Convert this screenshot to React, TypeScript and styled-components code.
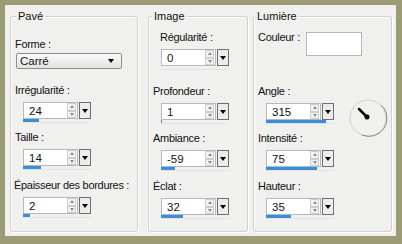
import React from "react";
import styled, { createGlobalStyle } from "styled-components";

const Global = createGlobalStyle`
  html, body { margin: 0; padding: 0; background: #9b9c76; }
  * { box-sizing: border-box; }
`;

const Frame = styled.div`
  width: 402px;
  height: 244px;
  background: #f0f0ee;
  border-style: solid;
  border-color: #9b9c76;
  border-width: 5px 6px 8px 5px;
  padding: 11px 0 4px 5px;
  display: flex;
  font-family: "Liberation Sans", Arial, sans-serif;
  font-size: 11px;
  color: #111;
`;

const Group = styled.div<{ $width: number; $gap: number; $pt: number }>`
  position: relative;
  width: ${(p) => p.$width}px;
  margin-left: ${(p) => p.$gap}px;
  height: 100%;
  border: 1px solid #d2d2cc;
  border-radius: 3px;
  box-shadow: inset 1px 1px 0 #fff, 1px 1px 0 #fff;
  padding-top: ${(p) => p.$pt}px;
  display: flex;
  flex-direction: column;
`;

const Legend = styled.span<{ $left: number }>`
  position: absolute;
  top: -7px;
  left: ${(p) => p.$left}px;
  padding: 0 2px;
  line-height: 13px;
  background: #f0f0ee;
`;

const Label = styled.div<{ $indent: number }>`
  line-height: 14px;
  height: 14px;
  white-space: nowrap;
  letter-spacing: -0.3px;
  padding-left: ${(p) => p.$indent}px;
`;

const FieldBox = styled.div<{ $mt: number }>`
  margin-top: ${(p) => p.$mt}px;
  display: flex;
  flex-direction: column;
`;

const SpinWrap = styled.div`
  margin-left: 12px;
  margin-top: 5px;
  width: 68px;
  display: flex;
  flex-direction: column;
`;

const SpinRow = styled.div`
  display: flex;
  height: 17px;
`;

const Edit = styled.div`
  flex: 1;
  display: flex;
  align-items: center;
  background: #fff;
  border: 1px solid #b4b9c0;
  padding-left: 5px;
  font-size: 11.5px;
`;

const Value = styled.span`
  flex: 1;
`;

const Arrows = styled.div`
  width: 9px;
  height: 15px;
  display: flex;
  flex-direction: column;
  margin-right: 1px;
`;

const ArrowBtn = styled.div<{ $up?: boolean }>`
  flex: 1;
  background: #f2f2f2;
  border: 1px solid #cdcdcd;
  display: flex;
  align-items: center;
  justify-content: center;
  &::after {
    content: "";
    border-left: 2.5px solid transparent;
    border-right: 2.5px solid transparent;
    ${(p) =>
      p.$up
        ? "border-bottom: 3px solid #8c8c8c;"
        : "border-top: 3px solid #8c8c8c;"}
  }
`;

const DropBtn = styled.div`
  width: 12px;
  margin-left: 1px;
  background: #ececec;
  border: 1px solid #6e6e6e;
  display: flex;
  align-items: center;
  justify-content: center;
  &::after {
    content: "";
    border-left: 3.5px solid transparent;
    border-right: 3.5px solid transparent;
    border-top: 4px solid #000;
  }
`;

const Track = styled.div`
  height: 4px;
  border-bottom: 1px solid #e2e2e2;
`;

const Fill = styled.div`
  height: 3px;
  background: #3a8ddc;
`;

const Combo = styled.div`
  margin: 2px 0 0 5px;
  width: 106px;
  height: 16px;
  border: 1px solid #8e8e8e;
  border-radius: 2px;
  background: linear-gradient(#fafafa, #e2e2e2);
  display: flex;
  align-items: center;
  justify-content: space-between;
  padding: 0 7px 0 3px;
  font-size: 11.5px;
  &::after {
    content: "";
    border-left: 3.5px solid transparent;
    border-right: 3.5px solid transparent;
    border-top: 4px solid #000;
  }
`;

const ColorRow = styled.div`
  display: flex;
  align-items: flex-start;
  gap: 6px;
`;

const Swatch = styled.div`
  margin-top: 2px;
  width: 56px;
  height: 24px;
  background: #fff;
  border: 1px solid #b8b8b8;
`;

const AngleRow = styled.div`
  display: flex;
  align-items: flex-start;
`;

const Dial = styled.svg`
  margin: 42px 0 -14px 14px;
`;

type FieldProps = { label: string; value: string; frac: number; mt: number; indent?: number };

const Field = ({ label, value, frac, mt, indent = 4 }: FieldProps) => (
  <FieldBox $mt={mt}>
    <Label $indent={indent}>{label}</Label>
    <SpinWrap>
      <SpinRow>
        <Edit>
          <Value>{value}</Value>
          <Arrows>
            <ArrowBtn $up />
            <ArrowBtn />
          </Arrows>
        </Edit>
        <DropBtn />
      </SpinRow>
      <Track>
        <Fill style={{ width: `${frac * 100}%` }} />
      </Track>
    </SpinWrap>
  </FieldBox>
);

export default function App() {
  return (
    <>
      <Global />
      <Frame>
        <Group $width={128} $gap={0} $pt={20}>
          <Legend $left={5}>Pavé</Legend>
          <Label $indent={4}>Forme :</Label>
          <Combo>Carré</Combo>
          <Field label="Irrégularité :" value="24" frac={0.24} mt={14} />
          <Field label="Taille :" value="14" frac={0.27} mt={7} />
          <Field label="Épaisseur des bordures :" value="2" frac={0.1} mt={8} indent={3} />
        </Group>
        <Group $width={100} $gap={10} $pt={13}>
          <Legend $left={3}>Image</Legend>
          <Field label="Régularité :" value="0" frac={0} mt={0} indent={11} />
          <Field label="Profondeur :" value="1" frac={0.01} mt={14} />
          <Field label="Ambiance :" value="-59" frac={0.205} mt={7} />
          <Field label="Éclat :" value="32" frac={0.32} mt={8} />
        </Group>
        <Group $width={139} $gap={5} $pt={13}>
          <Legend $left={1}>Lumière</Legend>
          <ColorRow>
            <Label $indent={4}>Couleur :</Label>
            <Swatch />
          </ColorRow>
          <AngleRow>
            <Field label="Angle :" value="315" frac={0.875} mt={28} />
            <Dial width="40" height="40" viewBox="0 0 40 40">
              <circle cx="20" cy="20" r="18" fill="none" stroke="#d0d0d0" strokeWidth="1" />
              <path d="M 33 7 A 18 18 0 0 1 14 37" fill="none" stroke="#8a8a8a" strokeWidth="1" />
              <line x1="11" y1="11" x2="19" y2="19" stroke="#000" strokeWidth="2.5" strokeLinecap="round" />
              <circle cx="19" cy="19" r="2.5" fill="#000" />
            </Dial>
          </AngleRow>
          <Field label="Intensité :" value="75" frac={0.75} mt={7} />
          <Field label="Hauteur :" value="35" frac={0.37} mt={8} />
        </Group>
      </Frame>
    </>
  );
}
